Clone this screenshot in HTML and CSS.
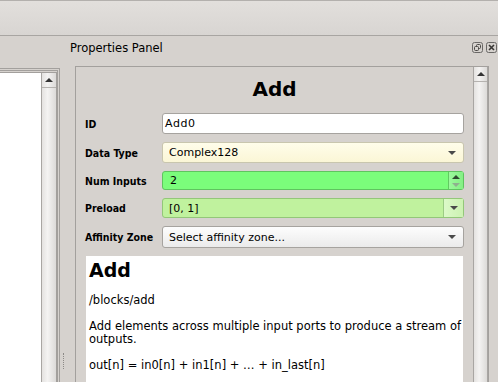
FILE: index.html
```html
<!DOCTYPE html>
<html>
  <head>
    <title>Properties Panel</title>
    <link rel="stylesheet" href="styles.css">
  </head>
  <body>
    <div class="toolbar"></div>

    <div class="dock-title">
      <span class="dock-name">Properties Panel</span>
      <span class="dock-buttons">
        <svg class="dock-btn" width="11" height="11" viewBox="0 0 11 11">
          <rect x="0.5" y="0.5" width="10" height="10" rx="2" fill="none" stroke="#6a6866"/>
          <rect x="4.5" y="2.5" width="4" height="4" rx="1" fill="none" stroke="#4a4846"/>
          <rect x="2.5" y="4.5" width="4" height="4" rx="1" fill="#d6d2ce" stroke="#4a4846"/>
        </svg>
        <svg class="dock-btn" width="11" height="11" viewBox="0 0 11 11">
          <rect x="0.5" y="0.5" width="10" height="10" rx="2" fill="none" stroke="#6a6866"/>
          <path d="M3 3 L8 8 M8 3 L3 8" stroke="#3a3836" stroke-width="1.6"/>
        </svg>
      </span>
    </div>

    <div class="dock-body">
      <!-- block tree on the left, mostly cut off -->
      <div class="side">
        <div class="side-inner">
          <div class="side-list"></div>
          <div class="vscroll">
            <div class="vscroll-up"><span class="tri-up"></span></div>
          </div>
        </div>
      </div>

      <div class="splitter"><div class="grip"></div></div>

      <div class="panel">
        <div class="panel-content">
          <div class="block-title">Add</div>

          <div class="form">
            <div class="label">ID</div>
            <div class="field line-edit">Add0</div>

            <div class="label">Data Type</div>
            <div class="field combo combo-type">
              <span class="value">Complex128</span>
              <span class="tri-down"></span>
            </div>

            <div class="label">Num Inputs</div>
            <div class="field spin">
              <span class="value">2</span>
              <span class="spin-btns">
                <span class="tri-up small"></span>
                <span class="tri-down small faded"></span>
              </span>
            </div>

            <div class="label">Preload</div>
            <div class="field editable-combo">
              <span class="value">[0, 1]</span>
              <span class="drop-btn"><span class="tri-down"></span></span>
            </div>

            <div class="label">Affinity Zone</div>
            <div class="field combo combo-plain">
              <span class="value">Select affinity zone...</span>
              <span class="tri-down"></span>
            </div>
          </div>

          <div class="doc">
            <h1>Add</h1>
            <p>/blocks/add</p>
            <p class="nowrap">Add elements across multiple input ports to produce a stream of<br>outputs.</p>
            <p>out[n] = in0[n] + in1[n] + … + in_last[n]</p>
          </div>
        </div>

        <div class="vscroll panel-scroll">
          <div class="vscroll-up"><span class="tri-up"></span></div>
        </div>
      </div>
    </div>
  </body>
</html>
```

FILE: styles.css
```css
html,
body {
  margin: 0;
  height: 382px;
  overflow: hidden;
}
body {
  background-color: #d6d2ce;
  font-family: "DejaVu Sans", sans-serif;
  font-size: 11px;
  color: #000;
}

.toolbar {
  height: 36px;
  box-sizing: border-box;
  border-top: 1px solid #b3b0ad;
  border-bottom: 1px solid #a8a5a2;
  background: linear-gradient(#e2dfdc, #d8d5d2);
}

.dock-title {
  display: flex;
  justify-content: space-between;
  height: 30px;
  padding: 5px 1px 0 70px;
  box-sizing: border-box;
}
.dock-name {
  font-size: 11.5px;
  line-height: 14px;
}
.dock-buttons {
  display: flex;
  gap: 3px;
  padding-top: 1px;
}

.dock-body {
  display: flex;
  height: 316px;
}

/* left tree view */
.side {
  width: 60px;
  box-sizing: border-box;
  margin-top: 2px;
  border-top: 3px double #a3a09d;
  border-right: 3px double #a3a09d;
  display: flex;
}
.side-inner {
  flex: 1;
  display: flex;
  margin: 1px 1px 0 0;
  border-top: 1px solid #a3a09d;
  border-right: 1px solid #a3a09d;
}
.side-list {
  width: 41px;
  background: #fff;
}

.vscroll {
  width: 14px;
  border-left: 1px solid #a9a6a3;
  background: linear-gradient(90deg, #e4e2e0, #f4f3f2 40%, #dcdad8);
}
.vscroll-up {
  height: 14px;
  border-bottom: 1px solid #b5b2af;
  display: flex;
  align-items: center;
  justify-content: center;
}

.tri-up {
  width: 0;
  height: 0;
  border-left: 4px solid transparent;
  border-right: 4px solid transparent;
  border-bottom: 4px solid #333;
}
.tri-down {
  width: 0;
  height: 0;
  border-left: 4px solid transparent;
  border-right: 4px solid transparent;
  border-top: 4px solid #4a4a4a;
}
.tri-up.small {
  border-bottom: 4px solid #2f4a2f;
}
.tri-down.faded {
  border-top: 4px solid #8fb08f;
}

.splitter {
  width: 15px;
  padding: 287px 0 0 3px;
  box-sizing: border-box;
}
.grip {
  height: 16px;
  border-left: 1px dotted #8c8986;
}

/* properties panel */
.panel {
  width: 414px;
  box-sizing: border-box;
  border: 1px solid #a3a09d;
  border-bottom: none;
  display: flex;
}
.panel-content {
  flex: 1;
  padding: 10px 9px 0 9px;
}
.panel-scroll {
  width: 13px;
  border-right: 1px solid #a9a6a3;
}

.block-title {
  font-size: 20px;
  font-weight: bold;
  line-height: 24px;
  text-align: center;
  margin-bottom: 12px;
}

.form {
  display: grid;
  grid-template-columns: 77px 1fr;
  grid-template-rows: 21px 21px 19px 20px 22px;
  row-gap: 8px;
  align-items: center;
}
.label {
  font-family: "DejaVu Sans Condensed", "DejaVu Sans", sans-serif;
  font-weight: bold;
  font-size: 10.5px;
}
.field {
  height: 100%;
  box-sizing: border-box;
  border: 1px solid #a6a39f;
  border-radius: 3px;
  display: flex;
  align-items: center;
}
.line-edit {
  background: #fff;
  padding-left: 2px;
  letter-spacing: 0.6px;
}
.combo {
  padding: 0 6px;
  justify-content: space-between;
}
.combo .tri-down {
  margin-right: 1px;
}
.combo-type {
  background: linear-gradient(#fffdea, #fbf6d6);
  border-color: #c9c6ae;
}
.combo-plain {
  background: linear-gradient(#fdfdfd, #ebebeb);
}
.spin {
  background: #7bfd7b;
  border-color: #5fc45f;
  padding-left: 7px;
  justify-content: space-between;
}
.spin-btns {
  align-self: stretch;
  width: 14px;
  border-left: 1px solid #62c862;
  background: linear-gradient(90deg, #9cf99c, #84f084);
  display: flex;
  flex-direction: column;
  align-items: center;
  justify-content: center;
  gap: 4px;
}
.editable-combo {
  background: #c0f29e;
  border-color: #93c779;
  padding-left: 6px;
  justify-content: space-between;
}
.drop-btn {
  align-self: stretch;
  width: 19px;
  border-left: 1px solid #9ccc84;
  background: linear-gradient(90deg, #dcf9c8, #ccf2b2);
  display: flex;
  align-items: center;
  justify-content: center;
}

/* documentation area */
.doc {
  background: #fff;
  margin: 8px 1px 0 1px;
  padding: 3px 0 0 3px;
  height: 126px;
  font-size: 11.5px;
  line-height: 13px;
}
.doc h1 {
  font-size: 19px;
  line-height: 22px;
  margin: 0;
}
.doc p {
  margin: 13px 0 0 0;
}
.nowrap {
  white-space: nowrap;
}
```
